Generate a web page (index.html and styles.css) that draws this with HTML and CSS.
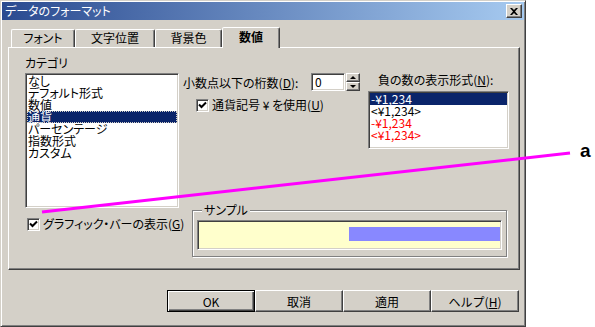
FILE: index.html
```html
<!DOCTYPE html>
<html lang="ja">
<head>
    <meta charset="UTF-8">
    <title>データのフォーマット</title>
    <link rel="stylesheet" href="styles.css">
</head>
<body>
    <div class="dialog">
        <div class="titlebar">
            <span class="title">データのフォーマット</span>
            <button class="close-btn">
                <svg width="8" height="7" viewBox="0 0 8 7"><path d="M0 0h2l2 2 2-2h2L5 3.5 8 7H6L4 5 2 7H0l3-3.5z" fill="#000"/></svg>
            </button>
        </div>

        <!-- tabs -->
        <div class="tabs">
            <div class="tab tab-font">フォント</div>
            <div class="tab tab-align">文字位置</div>
            <div class="tab tab-bg">背景色</div>
            <div class="tab tab-num active">数値</div>
        </div>

        <div class="panel">
            <div class="top-row">
                <div class="col-cat">
                    <div class="field-label">カテゴリ</div>
                    <ul class="listbox cat-list">
                        <li>なし</li>
                        <li>デフォルト形式</li>
                        <li>数値</li>
                        <li class="selected focused">通貨</li>
                        <li>パーセンテージ</li>
                        <li>指数形式</li>
                        <li>カスタム</li>
                    </ul>
                </div>

                <div class="col-mid">
                    <div class="digits-row">
                        <span>小数点以下の桁数(<u>D</u>):</span>
                        <div class="spin">
                            <div class="spin-edit">0</div>
                            <div class="spin-btns">
                                <div class="spin-btn"><span class="arrow-up"></span></div>
                                <div class="spin-btn"><span class="arrow-down"></span></div>
                            </div>
                        </div>
                    </div>
                    <label class="check currency-check">
                        <span class="checkbox">
                            <svg width="9" height="9" viewBox="0 0 9 9"><path d="M1 3.5l2.5 2.5L8 1.5" stroke="#000" stroke-width="2" fill="none"/></svg>
                        </span>
                        <span>通貨記号 ¥ を使用(<u>U</u>)</span>
                    </label>
                </div>

                <div class="col-neg">
                    <div class="field-label neg-label">負の数の表示形式(<u>N</u>):</div>
                    <ul class="listbox neg-list">
                        <li class="selected">-¥1,234</li>
                        <li>&lt;¥1,234&gt;</li>
                        <li class="red">-¥1,234</li>
                        <li class="red">&lt;¥1,234&gt;</li>
                    </ul>
                </div>
            </div>

            <div class="bottom-row">
                <label class="check graph-check">
                    <span class="checkbox">
                        <svg width="9" height="9" viewBox="0 0 9 9"><path d="M1 3.5l2.5 2.5L8 1.5" stroke="#000" stroke-width="2" fill="none"/></svg>
                    </span>
                    <span>グラフィック・バーの表示(<u>G</u>)</span>
                </label>
                <fieldset class="sample">
                    <legend>サンプル</legend>
                    <div class="sample-box">
                        <div class="sample-bar"></div>
                    </div>
                </fieldset>
            </div>
        </div>

        <div class="buttons">
            <button class="btn default">OK</button>
            <button class="btn">取消</button>
            <button class="btn">適用</button>
            <button class="btn">ヘルプ(<u>H</u>)</button>
        </div>
    </div>

    <!-- annotation -->
    <svg class="callout-line" width="595" height="327" viewBox="0 0 595 327">
        <line x1="42" y1="212" x2="570" y2="153" stroke="#ff00ff" stroke-width="3"/>
    </svg>
    <span class="callout">a</span>
</body>
</html>
```

FILE: styles.css
```css
body {
    margin: 0;
    width: 595px;
    height: 327px;
    overflow: hidden;
    position: relative;
    background-color: #fff;
    color: #000;
    font-family: "Noto Sans CJK JP", sans-serif;
    font-size: 12px;
    font-feature-settings: "palt";
}

.dialog {
    width: 526px;
    height: 327px;
    box-sizing: border-box;
    padding: 1px;
    background-color: #d4d0c8;
    border: 1px solid;
    border-color: #d4d0c8 #404040 #404040 #d4d0c8;
    box-shadow: inset 1px 1px #fff, inset -1px -1px #808080;
}

.titlebar {
    height: 18px;
    display: flex;
    align-items: center;
    justify-content: space-between;
    padding: 0 2px 0 3px;
    background: linear-gradient(to right, #2a4a90, #a6caf0);
    color: #fff;
    line-height: 14px;
}

.close-btn {
    width: 16px;
    height: 14px;
    box-sizing: border-box;
    padding: 0;
    display: flex;
    align-items: center;
    justify-content: center;
    background-color: #d4d0c8;
    border: 1px solid;
    border-color: #fff #404040 #404040 #fff;
    box-shadow: inset -1px -1px #808080;
}

/* tabs */
.tabs {
    height: 27px;
    display: flex;
    align-items: flex-end;
    padding-left: 9px;
}

.tab {
    height: 18px;
    box-sizing: border-box;
    border: 1px solid;
    border-bottom: none;
    border-color: #fff #404040 transparent #fff;
    border-radius: 2px 2px 0 0;
    box-shadow: inset -1px 0 #808080;
    text-align: center;
    line-height: 16px;
}

.tab-font { width: 64px; }
.tab-align { width: 80px; }
.tab-bg { width: 67px; }

.tab-num {
    width: 58px;
}

.tab.active {
    height: 21px;
    margin-bottom: -1px;
    position: relative;
    z-index: 1;
    background-color: #d4d0c8;
    font-weight: bold;
    line-height: 18px;
}

.panel {
    height: 223px;
    box-sizing: border-box;
    margin: 0 4px 0 6px;
    padding: 8px 0 0 16px;
    border: 1px solid;
    border-color: #fff #404040 #404040 #fff;
    box-shadow: inset -1px -1px #808080;
}

.top-row {
    display: flex;
    align-items: flex-start;
}

.field-label {
    line-height: 14px;
    margin-bottom: 3px;
}

.listbox {
    list-style: none;
    margin: 0;
    padding: 1px;
    box-sizing: border-box;
    background-color: #fff;
    border: 1px solid;
    border-color: #808080 #fff #fff #808080;
    box-shadow: inset 1px 1px #404040, inset -1px -1px #d4d0c8;
}

.listbox li {
    line-height: 12px;
    height: 12px;
    padding-left: 1px;
    white-space: nowrap;
}

.listbox li.selected {
    background-color: #0a246a;
    color: #fff;
}

.listbox li.focused {
    outline: 1px dotted #d4d0c8;
    outline-offset: -1px;
}

.listbox li.red {
    color: #ff0000;
}

.col-cat {
    width: 154px;
}

.cat-list {
    height: 135px;
}

.col-mid {
    width: 179px;
    margin-left: 4px;
    padding-top: 17px;
}

.digits-row {
    height: 18px;
    display: flex;
    align-items: center;
    justify-content: space-between;
    padding-right: 2px;
}

.spin {
    display: flex;
    gap: 1px;
}

.spin-edit {
    width: 34px;
    height: 18px;
    box-sizing: border-box;
    padding-left: 3px;
    line-height: 16px;
    background-color: #fff;
    border: 1px solid;
    border-color: #808080 #fff #fff #808080;
    box-shadow: inset 1px 1px #404040, inset -1px -1px #d4d0c8;
}

.spin-btns {
    display: flex;
    flex-direction: column;
    width: 14px;
}

.spin-btn {
    height: 9px;
    box-sizing: border-box;
    display: flex;
    align-items: center;
    justify-content: center;
    border: 1px solid;
    border-color: #fff #404040 #404040 #fff;
    box-shadow: inset -1px -1px #808080;
}

.arrow-up {
    width: 0;
    height: 0;
    border-left: 3px solid transparent;
    border-right: 3px solid transparent;
    border-bottom: 3px solid #000;
}

.arrow-down {
    width: 0;
    height: 0;
    border-left: 3px solid transparent;
    border-right: 3px solid transparent;
    border-top: 3px solid #000;
}

.check {
    display: flex;
    align-items: center;
    gap: 3px;
    line-height: 14px;
}

.checkbox {
    width: 13px;
    height: 13px;
    box-sizing: border-box;
    display: flex;
    align-items: center;
    justify-content: center;
    background-color: #fff;
    border: 1px solid;
    border-color: #808080 #fff #fff #808080;
    box-shadow: inset 1px 1px #404040, inset -1px -1px #d4d0c8;
}

.currency-check {
    margin-top: 7px;
    padding-left: 13px;
}

.col-neg {
    width: 141px;
    margin-left: 6px;
    padding-top: 17px;
}

.neg-label {
    padding-left: 10px;
    margin-bottom: 4px;
}

.neg-list {
    height: 58px;
}

.bottom-row {
    display: flex;
    align-items: flex-start;
}

.graph-check {
    width: 165px;
    margin-top: 9px;
    padding-left: 2px;
}

.sample {
    width: 315px;
    height: 54px;
    box-sizing: border-box;
    margin: -5px 0 0 0;
    padding: 3px 0 0 4px;
    border: 1px solid #808080;
    box-shadow: 1px 1px #fff, inset 1px 1px #fff;
}

.sample legend {
    margin-left: 5px;
    padding: 0 2px;
    line-height: 14px;
    background-color: #d4d0c8;
}

.sample-box {
    width: 305px;
    height: 30px;
    box-sizing: border-box;
    display: flex;
    justify-content: flex-end;
    padding-top: 6px;
    background-color: #ffffcc;
    border: 1px solid;
    border-color: #808080 #fff #fff #808080;
    box-shadow: inset 1px 1px #404040, inset -1px -1px #d4d0c8;
}

.sample-bar {
    width: 151px;
    height: 14px;
    margin-right: 1px;
    background-color: #8888ff;
}

.buttons {
    display: flex;
    justify-content: flex-end;
    margin-top: 20px;
    padding-right: 5px;
}

.btn {
    width: 88px;
    height: 22px;
    box-sizing: border-box;
    padding: 0;
    font-family: inherit;
    font-size: 12px;
    background-color: #d4d0c8;
    color: #000;
    border: 1px solid;
    border-color: #fff #404040 #404040 #fff;
    box-shadow: inset -1px -1px #808080;
}

.btn.default {
    border-color: #000;
    box-shadow: inset 1px 1px #fff, inset -1px -1px #404040, inset -2px -2px #808080;
}

.callout-line {
    position: absolute;
    left: 0;
    top: 0;
    pointer-events: none;
}

.callout {
    position: absolute;
    left: 580px;
    top: 140px;
    font-family: "Liberation Sans", Arial, sans-serif;
    font-size: 19px;
    font-weight: bold;
}
```
